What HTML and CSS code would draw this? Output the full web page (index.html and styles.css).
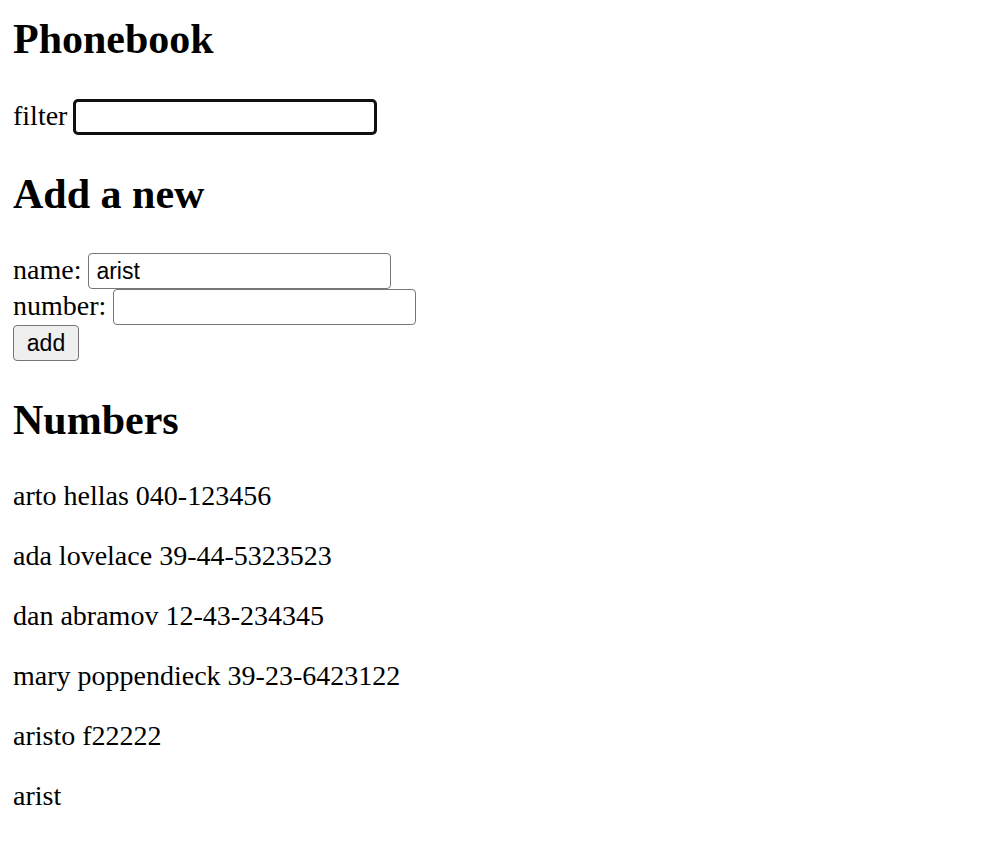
FILE: index.html
```html
<!DOCTYPE html>
<html lang="en">
<head>
<meta charset="utf-8">
<title>Phonebook</title>
<link rel="stylesheet" href="styles.css">
</head>
<body>
<div id="root">
  <section class="app">
    <h1 class="heading heading-top">Phonebook</h1>
    <div class="row row-filter">
      <span class="label">filter</span>
      <input class="field field-focus" type="text" value="">
    </div>
    <h2 class="heading">Add a new</h2>
    <form class="form">
      <div class="row">
        <span class="label">name:</span>
        <input class="field" type="text" value="arist">
      </div>
      <div class="row">
        <span class="label">number:</span>
        <input class="field" type="text" value="">
      </div>
      <div class="row">
        <button class="btn" type="button">add</button>
      </div>
    </form>
    <h2 class="heading heading-list">Numbers</h2>
    <div class="entries">
      <p class="entry">arto hellas 040-123456</p>
      <p class="entry">ada lovelace 39-44-5323523</p>
      <p class="entry">dan abramov 12-43-234345</p>
      <p class="entry">mary poppendieck 39-23-6423122</p>
      <p class="entry">aristo f22222</p>
      <p class="entry">arist</p>
    </div>
  </section>
</div>
</body>
</html>
```
FILE: styles.css
```css
html, body {
  background: #ffffff;
}

body {
  margin: 15px 13px 14px 13px;
  font-family: "Liberation Serif", "Times New Roman", serif;
  font-size: 28px;
  color: #000000;
}

.heading {
  font-size: 42px;
  font-weight: bold;
  line-height: 48px;
  margin: 35px 0;
}

.heading-top {
  margin-top: 0;
  margin-bottom: 36px;
}

.heading-list {
  margin-bottom: 36px;
}

.row {
  display: flex;
  align-items: baseline;
  gap: 7px;
  height: 36px;
  line-height: 32px;
}

.row-filter {
  gap: 6px;
}

.form {
  margin: 0;
}

.label {
  white-space: nowrap;
}

.field {
  box-sizing: border-box;
  width: 303px;
  height: 36px;
  margin: 0;
  padding: 0 7px;
  border: 1px solid #767676;
  border-radius: 4px;
  background: #ffffff;
  font-family: "Liberation Sans", Arial, sans-serif;
  font-size: 23px;
  color: #000000;
  outline: none;
}

.field-focus {
  width: 304px;
  border: 3px solid #101010;
  border-radius: 5px;
}

.btn {
  box-sizing: border-box;
  width: 66px;
  height: 36px;
  margin: 0;
  padding: 0;
  border: 1px solid #767676;
  border-radius: 4px;
  background: #efefef;
  font-family: "Liberation Sans", Arial, sans-serif;
  font-size: 23px;
  color: #000000;
  align-self: flex-start;
}

.entries {
  margin: 0;
}

.entry {
  margin: 28px 0;
  line-height: 32px;
}
```
